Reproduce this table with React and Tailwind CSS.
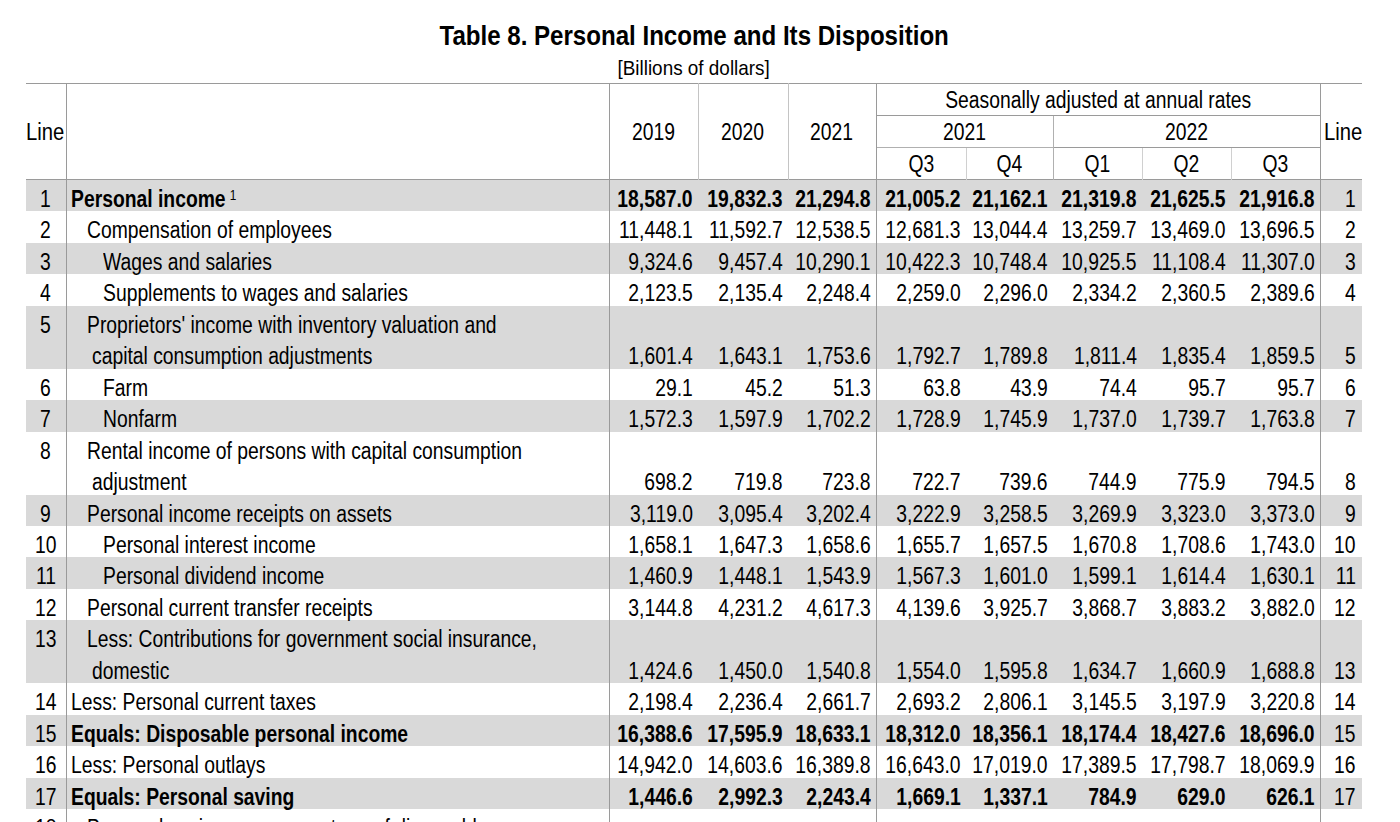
const rows = [
  { n: 1, text: ["Personal income"], sup: "1", bold: true, indent: 0, v: ["18,587.0", "19,832.3", "21,294.8", "21,005.2", "21,162.1", "21,319.8", "21,625.5", "21,916.8"] },
  { n: 2, text: ["Compensation of employees"], indent: 1, v: ["11,448.1", "11,592.7", "12,538.5", "12,681.3", "13,044.4", "13,259.7", "13,469.0", "13,696.5"] },
  { n: 3, text: ["Wages and salaries"], indent: 2, v: ["9,324.6", "9,457.4", "10,290.1", "10,422.3", "10,748.4", "10,925.5", "11,108.4", "11,307.0"] },
  { n: 4, text: ["Supplements to wages and salaries"], indent: 2, v: ["2,123.5", "2,135.4", "2,248.4", "2,259.0", "2,296.0", "2,334.2", "2,360.5", "2,389.6"] },
  { n: 5, text: ["Proprietors' income with inventory valuation and", "capital consumption adjustments"], indent: 1, v: ["1,601.4", "1,643.1", "1,753.6", "1,792.7", "1,789.8", "1,811.4", "1,835.4", "1,859.5"] },
  { n: 6, text: ["Farm"], indent: 2, v: ["29.1", "45.2", "51.3", "63.8", "43.9", "74.4", "95.7", "95.7"] },
  { n: 7, text: ["Nonfarm"], indent: 2, v: ["1,572.3", "1,597.9", "1,702.2", "1,728.9", "1,745.9", "1,737.0", "1,739.7", "1,763.8"] },
  { n: 8, text: ["Rental income of persons with capital consumption", "adjustment"], indent: 1, v: ["698.2", "719.8", "723.8", "722.7", "739.6", "744.9", "775.9", "794.5"] },
  { n: 9, text: ["Personal income receipts on assets"], indent: 1, v: ["3,119.0", "3,095.4", "3,202.4", "3,222.9", "3,258.5", "3,269.9", "3,323.0", "3,373.0"] },
  { n: 10, text: ["Personal interest income"], indent: 2, v: ["1,658.1", "1,647.3", "1,658.6", "1,655.7", "1,657.5", "1,670.8", "1,708.6", "1,743.0"] },
  { n: 11, text: ["Personal dividend income"], indent: 2, v: ["1,460.9", "1,448.1", "1,543.9", "1,567.3", "1,601.0", "1,599.1", "1,614.4", "1,630.1"] },
  { n: 12, text: ["Personal current transfer receipts"], indent: 1, v: ["3,144.8", "4,231.2", "4,617.3", "4,139.6", "3,925.7", "3,868.7", "3,883.2", "3,882.0"] },
  { n: 13, text: ["Less: Contributions for government social insurance,", "domestic"], indent: 1, v: ["1,424.6", "1,450.0", "1,540.8", "1,554.0", "1,595.8", "1,634.7", "1,660.9", "1,688.8"] },
  { n: 14, text: ["Less: Personal current taxes"], indent: 0, v: ["2,198.4", "2,236.4", "2,661.7", "2,693.2", "2,806.1", "3,145.5", "3,197.9", "3,220.8"] },
  { n: 15, text: ["Equals: Disposable personal income"], bold: true, indent: 0, v: ["16,388.6", "17,595.9", "18,633.1", "18,312.0", "18,356.1", "18,174.4", "18,427.6", "18,696.0"] },
  { n: 16, text: ["Less: Personal outlays"], indent: 0, v: ["14,942.0", "14,603.6", "16,389.8", "16,643.0", "17,019.0", "17,389.5", "17,798.7", "18,069.9"] },
  { n: 17, text: ["Equals: Personal saving"], bold: true, indent: 0, v: ["1,446.6", "2,992.3", "2,243.4", "1,669.1", "1,337.1", "784.9", "629.0", "626.1"] },
  { n: 18, text: ["Personal saving as a percentage of disposable", "personal income"], indent: 1, v: ["8.8", "17.0", "12.0", "9.1", "7.3", "4.3", "3.4", "3.3"] },
];

const indents = ["pl-[4px]", "pl-[20px]", "pl-[36px]"];
// body columns that carry a rule on their right
const rightLine = [false, false, true, false, false, false, false, true];

// no narrow face installed, so squeeze Liberation Sans to Arial Narrow widths
const Narrow = ({ children, side = "left" }) => {
  const origin = side === "right" ? "origin-right" : side === "center" ? "origin-center" : "origin-left";
  return <span className={"inline-block whitespace-nowrap scale-x-[0.84] " + origin}>{children}</span>;
};

const Th = ({ children, className = "", ...rest }) => (
  <th className={"font-normal leading-[24px] " + className} {...rest}>
    <Narrow side="center">{children}</Narrow>
  </th>
);

const App = () => {
  return (
    <div className="h-[822px] overflow-hidden bg-white text-black font-['Liberation_Sans',Arial,sans-serif]">
      <div className="w-[1336px] ml-[26px]">
        <div className="pt-[20px] h-[51px] text-center text-[28px] leading-[32px] font-bold">
          <span className="inline-block whitespace-nowrap scale-x-[0.86] origin-center">Table 8. Personal Income and Its Disposition</span>
        </div>
        <div className="h-[32px] pt-[6px] text-center text-[21px] leading-[22px]">
          <span className="inline-block whitespace-nowrap scale-x-[0.9] origin-center">[Billions of dollars]</span>
        </div>

        <table className="table-fixed border-collapse w-[1336px] text-[23px]">
          <colgroup>
            <col className="w-[40px]" />
            <col className="w-[543px]" />
            <col className="w-[89px]" />
            <col className="w-[90px]" />
            <col className="w-[88px]" />
            <col className="w-[90px]" />
            <col className="w-[87px]" />
            <col className="w-[89px]" />
            <col className="w-[89px]" />
            <col className="w-[89px]" />
            <col className="w-[42px]" />
          </colgroup>
          <thead className="border-t border-b border-[#9a9a9a]">
            <tr className="h-[32px]">
              <th rowSpan={3} className="font-normal text-left leading-[24px] border-r border-[#9a9a9a]">
                <span className="inline-block whitespace-nowrap scale-x-[0.88] origin-left">Line</span>
              </th>
              <th rowSpan={3} className="border-r border-[#9a9a9a]"></th>
              <Th rowSpan={3} className="border-r border-[#c4c4c4]">2019</Th>
              <Th rowSpan={3} className="border-r border-[#c4c4c4]">2020</Th>
              <Th rowSpan={3} className="border-r border-[#9a9a9a]">2021</Th>
              <Th colSpan={5} className="border-b border-r border-[#9a9a9a]">Seasonally adjusted at annual rates</Th>
              <th rowSpan={3} className="font-normal text-left pl-[3px] leading-[24px]">
                <span className="inline-block whitespace-nowrap scale-x-[0.88] origin-left">Line</span>
              </th>
            </tr>
            <tr className="h-[32px]">
              <Th colSpan={2} className="border-b border-r border-[#b0b0b0]">2021</Th>
              <Th colSpan={3} className="border-b border-r border-[#9a9a9a]">2022</Th>
            </tr>
            <tr className="h-[32px]">
              {["Q3", "Q4", "Q1", "Q2", "Q3"].map((q, i) => (
                <Th
                  key={i}
                  className={"border-r " + (i === 4 ? "border-[#9a9a9a]" : i === 1 ? "border-[#b0b0b0]" : "border-[#d0d0d0]")}
                >
                  {q}
                </Th>
              ))}
            </tr>
          </thead>
          <tbody>
            {rows.map((r, ri) => (
              <tr key={r.n} className={ri % 2 === 0 ? "bg-[#d9d9d9]" : "bg-white"}>
                <td className="align-top text-center leading-[31.45px] border-r border-[#9a9a9a]">
                  <span className="relative top-[4px]">
                    <Narrow side="center">{r.n}</Narrow>
                  </span>
                </td>
                <td className={"align-top leading-[31.45px] border-r border-[#9a9a9a] whitespace-nowrap " + indents[r.indent] + (r.bold ? " font-bold" : "")}>
                  {r.text.map((t, i) => (
                    <div key={i} className={"relative top-[4px] " + (i > 0 ? "pl-[5px]" : "")}>
                      <Narrow>
                        {t}
                        {r.sup && <sup className="text-[14px] font-normal ml-[5px] relative -top-[7px]">{r.sup}</sup>}
                      </Narrow>
                    </div>
                  ))}
                </td>
                {r.v.map((x, i) => (
                  <td
                    key={i}
                    className={
                      "align-bottom pr-[5px] leading-[31.45px] whitespace-nowrap" +
                      (r.bold ? " font-bold" : "") +
                      (rightLine[i] ? " border-r border-[#9a9a9a]" : "")
                    }
                  >
                    <div className="flex justify-end relative top-[4px]">
                      <Narrow side="right">{x}</Narrow>
                    </div>
                  </td>
                ))}
                <td className="align-bottom pr-[6px] leading-[31.45px]">
                  <div className="flex justify-end relative top-[4px]">
                    <Narrow side="right">{r.n}</Narrow>
                  </div>
                </td>
              </tr>
            ))}
          </tbody>
        </table>
      </div>
    </div>
  );
};

export default App;
